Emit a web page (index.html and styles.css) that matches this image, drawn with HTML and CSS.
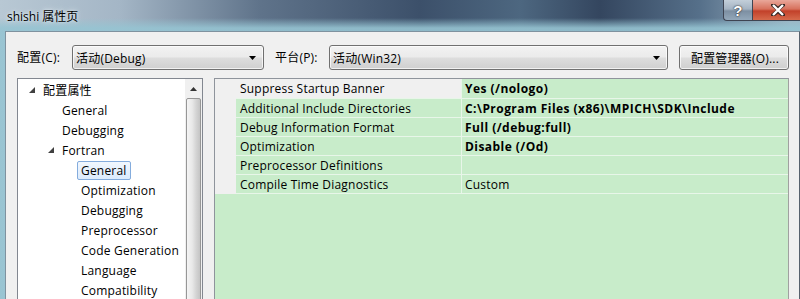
FILE: index.html
```html
<!DOCTYPE html>
<html>
<head>
<meta charset="utf-8">
<link rel="stylesheet" href="styles.css">
</head>
<body>
<div class="window">
  <div class="titlebar">
    <span class="title">shishi 属性页</span>
    <div class="caption-btns">
      <div class="cbtn help">?</div>
      <div class="cbtn close">
        <svg width="14" height="12" viewBox="0 0 14 12"><path d="M2 1 L7 5 L12 1 M2 11 L7 7 L12 11" fill="none" stroke="#3b2a26" stroke-width="4" stroke-linecap="square"/><path d="M2 1 L12 11 M12 1 L2 11" fill="none" stroke="#fff" stroke-width="2.4"/></svg>
      </div>
    </div>
  </div>
  <div class="client">
    <div class="toolbar">
      <span class="lbl l1">配置(C):</span>
      <div class="combo c1"><span>活动(Debug)</span><svg class="arr" width="7" height="4" viewBox="0 0 7 4"><path d="M0 0H7L3.5 4Z" fill="#000"/></svg></div>
      <span class="lbl l2">平台(P):</span>
      <div class="combo c2"><span>活动(Win32)</span><svg class="arr" width="7" height="4" viewBox="0 0 7 4"><path d="M0 0H7L3.5 4Z" fill="#000"/></svg></div>
      <div class="btn">配置管理器(O)...</div>
    </div>
    <div class="panels">
      <div class="tree">
        <div class="tree-list">
          <div class="node lv0"><span class="tog"><svg width="6" height="6" viewBox="0 0 6 6"><path d="M6 0V6H0Z" fill="#404040"/></svg></span><span class="txt">配置属性</span></div>
          <div class="node lv1"><span class="tog"></span><span class="txt">General</span></div>
          <div class="node lv1"><span class="tog"></span><span class="txt">Debugging</span></div>
          <div class="node lv1"><span class="tog"><svg width="6" height="6" viewBox="0 0 6 6"><path d="M6 0V6H0Z" fill="#404040"/></svg></span><span class="txt">Fortran</span></div>
          <div class="node lv2"><span class="tog"></span><span class="txt sel">General</span></div>
          <div class="node lv2"><span class="tog"></span><span class="txt">Optimization</span></div>
          <div class="node lv2"><span class="tog"></span><span class="txt">Debugging</span></div>
          <div class="node lv2"><span class="tog"></span><span class="txt">Preprocessor</span></div>
          <div class="node lv2"><span class="tog"></span><span class="txt">Code Generation</span></div>
          <div class="node lv2"><span class="tog"></span><span class="txt">Language</span></div>
          <div class="node lv2"><span class="tog"></span><span class="txt">Compatibility</span></div>
        </div>
        <div class="scrollbar">
          <div class="sb-up"><svg width="7" height="4" viewBox="0 0 7 4"><path d="M0 4H7L3.5 0Z" fill="#333"/></svg></div>
          <div class="sb-thumb"></div>
        </div>
      </div>
      <div class="grid">
        <div class="row first"><div class="gut"></div><div class="name selname">Suppress Startup Banner</div><div class="val b">Yes (/nologo)</div></div>
        <div class="row"><div class="gut"></div><div class="name">Additional Include Directories</div><div class="val b">C:\Program Files (x86)\MPICH\SDK\Include</div></div>
        <div class="row"><div class="gut"></div><div class="name">Debug Information Format</div><div class="val b">Full (/debug:full)</div></div>
        <div class="row"><div class="gut"></div><div class="name">Optimization</div><div class="val b">Disable (/Od)</div></div>
        <div class="row"><div class="gut"></div><div class="name">Preprocessor Definitions</div><div class="val"></div></div>
        <div class="row"><div class="gut"></div><div class="name">Compile Time Diagnostics</div><div class="val">Custom</div></div>
      </div>
    </div>
  </div>
</div>
</body>
</html>
```

FILE: styles.css
```css
* { box-sizing: border-box; }
html, body { margin: 0; padding: 0; }
body {
  width: 800px; height: 299px; overflow: hidden;
  font-family: "Open Sans", "Noto Sans CJK SC", sans-serif;
  font-size: 12px; color: #000; letter-spacing: 0.2px;
}
.window {
  width: 800px; height: 299px;
  background:
    linear-gradient(180deg, rgba(160,200,212,0) 0, rgba(160,200,212,0) 18px, rgba(150,196,210,.9) 28px, rgba(150,196,210,.9) 100%),
    linear-gradient(90deg, #b8c8d4 0, #a4b6c6 120px, #5f738a 260px, #3c506a 420px, #4d6780 520px, #34465f 600px, #56708a 700px, #9db3c2 790px);
  background-color: #8fb6c3;
}
.titlebar {
  height: 31px; display: flex; justify-content: space-between; align-items: flex-start;
}
.title {
  margin: 8px 0 0 7px; font-size: 12px; line-height: 18px; color: #000; letter-spacing: 0;
  text-shadow: 0 0 6px rgba(230,240,245,.9), 0 0 3px rgba(230,240,245,.9);
}
.caption-btns { display: flex; margin-right: -4px; }
.cbtn {
  height: 21px; border: 1px solid #3e4452; border-top: none;
  display: flex; align-items: center; justify-content: center;
}
.help {
  width: 29px; border-radius: 0 0 0 4px; border-right: none;
  background: linear-gradient(180deg, #c3cfda 0, #a5b4c3 45%, #7d8fa2 55%, #93a8ba 100%);
  color: #fff; font-weight: bold; font-size: 15px; line-height: 1;
  text-shadow: 0 0 2px #333, 0 0 1px #222;
  font-family: "Liberation Sans", sans-serif;
}
.close {
  width: 52px; border-radius: 0 0 4px 0;
  background: linear-gradient(180deg, #e9a79a 0, #d7715d 45%, #c2412a 55%, #d66a4c 100%);
}
.client {
  margin-left: 5px; height: 300px;
  border: 1px solid #7f929f; border-right-color: #56616d;
  background: #f0f0f0;
  padding: 13px 0 0 11px;
}
.toolbar { display: flex; align-items: center; height: 25px; }
.lbl { line-height: 25px; white-space: nowrap; }
.l1 { width: 55px; }
.l2 { width: 54px; margin-left: 11px; }
.combo, .btn {
  height: 25px; border: 1px solid #707070; border-radius: 3px;
  background: linear-gradient(180deg, #f2f2f2 0, #ebebeb 48%, #dddddd 52%, #cfcfcf 100%);
  box-shadow: inset 0 0 0 1px rgba(255,255,255,.7);
}
.combo { display: flex; align-items: center; justify-content: space-between; padding: 0 7px 0 3px; }
.c1 { width: 192px; }
.c2 { width: 339px; }
.btn { width: 110px; margin-left: 11px; display: flex; align-items: center; justify-content: center; padding-left: 2px; }
.panels { display: flex; margin-top: 8px; gap: 11px; }
.tree {
  width: 186px; height: 230px; background: #fff; border: 1px solid #828790;
  display: flex;
}
.tree-list { flex: 1; padding-top: 1px; }
.node { height: 20px; display: flex; align-items: center; }
.lv0 { padding-left: 11px; }
.lv1 { padding-left: 30px; }
.lv2 { padding-left: 49px; }
.tog { width: 10px; height: 20px; display: flex; align-items: center; }
.txt {
  height: 19px; line-height: 17px; padding: 0 3px; border: 1px solid transparent; border-radius: 2px;
  white-space: nowrap;
}
.txt.sel {
  border-color: #84acdd;
  background: linear-gradient(180deg, #f1f7fe 0, #dcebfc 100%);
}
.scrollbar { width: 17px; background: #f0f0f0; display: flex; flex-direction: column; align-items: center; }
.sb-up { height: 19px; width: 17px; display: flex; align-items: center; justify-content: center; }
.sb-thumb {
  width: 15px; flex: 1; border: 1px solid #979797; border-radius: 2px;
  background: linear-gradient(90deg, #f5f5f5 0, #e8e8e8 40%, #d4d4d4 70%, #c4c4c4 100%);
}
.grid {
  width: 575px; height: 230px; border: 1px solid #8f949c; border-right-color: #a0a0a0;
  background: #c8ecca;
}
.row { display: flex; height: 19px; }
.row.first { height: 20px; }
.gut { width: 21px; background: #f0f0f0; }
.name, .val {
  border-bottom: 1px solid #e8f6e9; line-height: 19px; white-space: nowrap; overflow: hidden;
}
.name { width: 226px; padding-left: 4px; border-right: 1px solid #e8f6e9; }
.selname { background: #f0f0f0; }
.row.first .name, .row.first .val { line-height: 20px; }
.val { flex: 1; padding-left: 3px; }
.b { font-weight: bold; letter-spacing: 0.45px; }
```
